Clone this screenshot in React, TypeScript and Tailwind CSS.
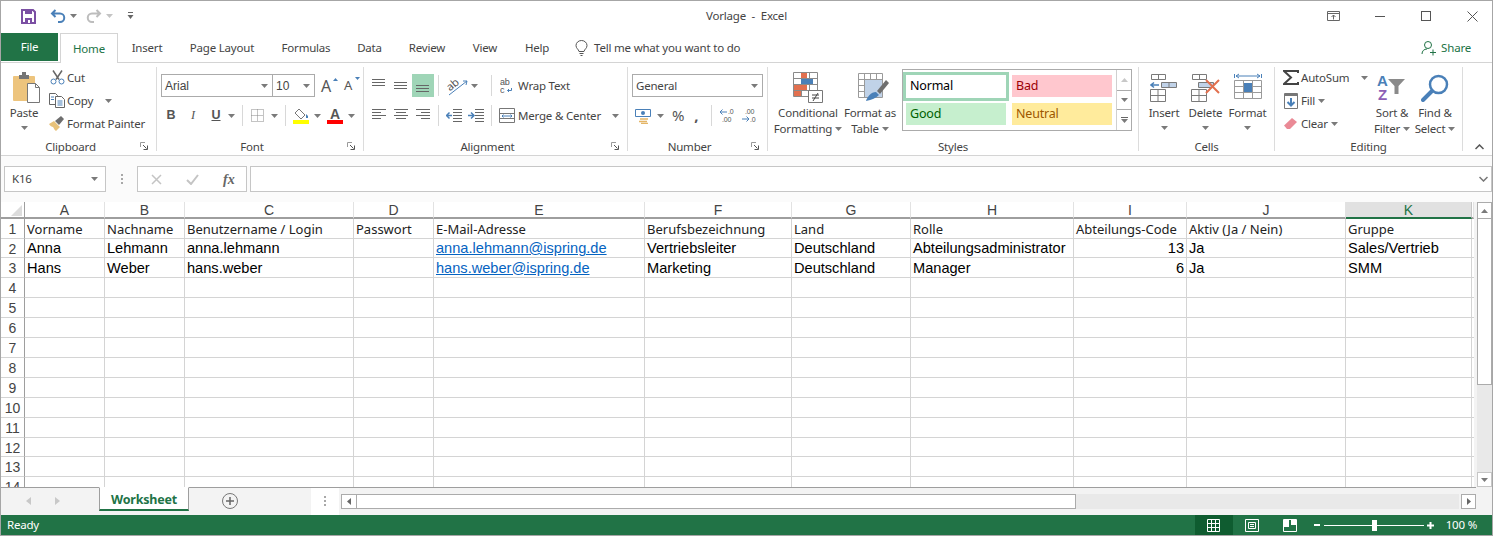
import type { ReactNode } from 'react';

const BLUE = '#4a80b8';

function Caret({ className = '' }: { className?: string }) {
  return (
    <svg width="7" height="4" viewBox="0 0 7 4" className={`shrink-0 ${className}`}>
      <path d="M0 0h7L3.5 4z" fill="#7a7a7a" />
    </svg>
  );
}

function Sep({ className = '' }: { className?: string }) {
  return <div className={`w-px h-[21px] bg-[#d8d8d8] shrink-0 ${className}`} />;
}

function Launcher() {
  return (
    <svg width="8" height="8" viewBox="0 0 8 8" className="mt-[3px]">
      <path d="M.5 5V.5H5" fill="none" stroke="#9a9a9a" />
      <path d="M3 3l3.5 3.5M7.5 3.5v4h-4" fill="none" stroke="#555" />
    </svg>
  );
}

function Group({ width, label, launcher, children }: { width: string; label: string; launcher?: boolean; children: ReactNode }) {
  return (
    <div className={`${width} shrink-0 flex flex-col border-r border-[#dcdcdc]`}>
      <div className="h-[72px] flex">{children}</div>
      <div className="h-[12px] flex leading-[16px] text-[11.5px] text-[#444]">
        <div className="flex-1 text-center whitespace-nowrap">{label}</div>
        {launcher && <div className="w-[16px]"><Launcher /></div>}
      </div>
    </div>
  );
}

function Lines({ kind }: { kind: 'top' | 'middle' | 'bottom' | 'left' | 'center' | 'right' }) {
  const rows: Record<string, string> = {
    top: 'M1 1.500h13M1 4.500h13M1 7.500h13',
    middle: 'M1 4.500h13M1 7.500h13M1 10.500h13',
    bottom: 'M1 7.500h13M1 10.500h13M1 13.500h13',
    left: 'M1 1.500h14M1 4.500h9M1 7.500h14M1 10.500h9',
    center: 'M1 1.500h14M3 4.500h10M1 7.500h14M3 10.500h10',
    right: 'M1 1.500h14M6 4.500h9M1 7.500h14M6 10.500h9',
  };
  return (
    <svg width="16" height="15" viewBox="0 0 16 15">
      <path d={rows[kind]} stroke="#666" fill="none" />
    </svg>
  );
}

function BigBtn({ label, caret, children, width }: { label: ReactNode; caret?: boolean; children: ReactNode; width: string }) {
  return (
    <div className={`${width} flex flex-col items-center text-[11.5px] text-[#444]`}>
      <div className="h-[35px] mt-[3px] flex items-center justify-center">{children}</div>
      <div className="leading-[16px] text-center whitespace-nowrap">{label}</div>
      {caret && <Caret className="mt-[5px]" />}
    </div>
  );
}

function SmallRow({ icon, label, caret, gap = 'ml-0' }: { icon: ReactNode; label: string; caret?: boolean; gap?: string }) {
  return (
    <div className="h-[23px] flex items-center text-[11.5px] text-[#444] whitespace-nowrap">
      <div className="w-[20px] flex justify-center">{icon}</div>
      <span>{label}</span>
      {caret && <Caret className={gap} />}
    </div>
  );
}

function Combo({ value, width, font = '' }: { value: string; width: string; font?: string }) {
  return (
    <div className={`${width} h-[23px] flex items-center justify-between border border-[#ababab] bg-white px-[3px] pr-[4px] text-[#444] ${font}`}>
      <span>{value}</span>
      <Caret />
    </div>
  );
}

const columns = [
  { name: 'A', w: 'w-[80px]' },
  { name: 'B', w: 'w-[80px]' },
  { name: 'C', w: 'w-[169px]' },
  { name: 'D', w: 'w-[80px]' },
  { name: 'E', w: 'w-[211px]' },
  { name: 'F', w: 'w-[147px]' },
  { name: 'G', w: 'w-[119px]' },
  { name: 'H', w: 'w-[163px]' },
  { name: 'I', w: 'w-[113px]' },
  { name: 'J', w: 'w-[159px]' },
  { name: 'K', w: 'w-[126px]' },
  { name: '', w: 'w-[2px]' },
];

const heights = ['h-[20px]', 'h-[19px]', 'h-[20px]', 'h-[20px]', 'h-[20px]', 'h-[20px]', 'h-[20px]', 'h-[20px]', 'h-[20px]', 'h-[20px]', 'h-[20px]', 'h-[19px]', 'h-[20px]', 'h-[20px]'];

const headerRow = ['Vorname', 'Nachname', 'Benutzername / Login', 'Passwort', 'E-Mail-Adresse', 'Berufsbezeichnung', 'Land', 'Rolle', 'Abteilungs-Code', 'Aktiv (Ja / Nein)', 'Gruppe', ''];
const dataRows = [
  ['Anna', 'Lehmann', 'anna.lehmann', '', 'anna.lehmann@ispring.de', 'Vertriebsleiter', 'Deutschland', 'Abteilungsadministrator', '13', 'Ja', 'Sales/Vertrieb', ''],
  ['Hans', 'Weber', 'hans.weber', '', 'hans.weber@ispring.de', 'Marketing', 'Deutschland', 'Manager', '6', 'Ja', 'SMM', ''],
];

function Cell({ value, col, row }: { value: string; col: number; row: number }) {
  const isHeader = row === 0;
  const link = !isHeader && col === 4;
  const right = !isHeader && col === 8;
  let look = "font-['Liberation_Sans'] text-[14.6px] text-black";
  if (isHeader) look = "font-['Noto_Sans'] text-[13px] text-[#222]";
  if (link) look = "font-['Liberation_Sans'] text-[14.6px] text-[#0563c1] underline";
  return (
    <div
      className={`${columns[col].w} shrink-0 border-r border-b border-[#d4d4d4] overflow-hidden whitespace-nowrap flex items-center px-[2px] pt-[2px] tracking-normal ${look} ${right ? 'justify-end' : ''}`}
    >
      {value}
    </div>
  );
}

function TitleBar() {
  return (
    <div className="h-[32px] shrink-0 grid grid-cols-[1fr_auto_1fr] items-center bg-white pb-[2px]">
      <div className="flex items-center pl-[20px]">
        <svg width="15" height="15" viewBox="0 0 15 15">
          <path d="M1 1h11l2 2v11H1z" fill="none" stroke="#7b4fa3" strokeWidth="2" />
          <path d="M4 1h7v4H4zM4 9h7v5H4z" fill="#7b4fa3" />
          <path d="M7 11h2v3H7z" fill="#fff" />
        </svg>
        <svg width="16" height="15" viewBox="0 0 16 15" className="ml-[14px]">
          <path d="M5.500 1L2 4.500 5.500 8M2.500 4.500H10a4 4 0 0 1 0 8.500H8" fill="none" stroke="#4a80b8" strokeWidth="2" />
        </svg>
        <Caret className="ml-[4px]" />
        <svg width="16" height="15" viewBox="0 0 16 15" className="ml-[9px]">
          <path d="M10.500 1L14 4.500 10.500 8M13.500 4.500H6a4 4 0 0 0 0 8.500H8" fill="none" stroke="#bdbdbd" strokeWidth="2" />
        </svg>
        <svg width="7" height="4" viewBox="0 0 7 4" className="ml-[4px]"><path d="M0 0h7L3.500 4z" fill="#c4c4c4" /></svg>
        <svg width="7" height="8" viewBox="0 0 7 8" className="ml-[14px]">
          <path d="M1 .5h5" stroke="#666" /><path d="M.5 3h6L3.500 7z" fill="#666" />
        </svg>
      </div>
      <div className="text-[11.5px] text-[#444] whitespace-pre">Vorlage  -  Excel</div>
      <div className="flex items-center justify-end">
        <svg width="14" height="11" viewBox="0 0 14 11" className="mr-[34px]">
          <path d="M.5.5h12v9H.5zM.5 2.500h12M6.500 8.500V4M4.500 6l2-2 2 2" fill="none" stroke="#666" />
        </svg>
        <div className="w-[10px] h-px bg-[#555] mr-[36px]" />
        <div className="w-[10px] h-[10px] border border-[#555] mr-[36px]" />
        <svg width="11" height="11" viewBox="0 0 11 11" className="mr-[14px]">
          <path d="M.5.5l10 10M10.500.5l-10 10" stroke="#555" />
        </svg>
      </div>
    </div>
  );
}

function Tabs() {
  const tabs = [
    { label: 'Insert', w: 'w-[58px]' },
    { label: 'Page Layout', w: 'w-[92px]' },
    { label: 'Formulas', w: 'w-[76px]' },
    { label: 'Data', w: 'w-[51px]' },
    { label: 'Review', w: 'w-[64px]' },
    { label: 'View', w: 'w-[52px]' },
    { label: 'Help', w: 'w-[52px]' },
  ];
  return (
    <div className="h-[30px] shrink-0 flex items-stretch border-b border-[#d4d4d4] text-[11.5px] text-[#444] bg-white">
      <div className="w-[57px] mb-px bg-[#217346] text-white flex items-center justify-center">File</div>
      <div className="w-[58px] ml-[2px] -mb-px bg-white border border-b-0 border-[#d4d4d4] text-[#217346] flex items-center justify-center">Home</div>
      {tabs.map((t) => (
        <div key={t.label} className={`${t.w} flex items-center justify-center`}>{t.label}</div>
      ))}
      <div className="flex items-center ml-[12px]">
        <svg width="13" height="16" viewBox="0 0 13 16">
          <path d="M4 11.500C3.500 9 1 8.500 1 5.500a5.500 5 0 0 1 11 0c0 3-2.500 3.500-3 6zM4.500 13.500h4M5.500 15.500h2" fill="none" stroke="#555" />
        </svg>
        <span className="ml-[6px]">Tell me what you want to do</span>
      </div>
      <div className="ml-auto mr-[21px] flex items-center text-[#217346]">
        <svg width="16" height="16" viewBox="0 0 16 16">
          <circle cx="7" cy="5" r="3.500" fill="none" stroke="#217346" />
          <path d="M1 14c0-3 2-5 5-5M9 12.500h6M12 9.500v6" fill="none" stroke="#217346" />
        </svg>
        <span className="ml-[4px]">Share</span>
      </div>
    </div>
  );
}

function ClipboardGroup() {
  return (
    <Group width="w-[156px]" label="Clipboard" launcher>
      <BigBtn label="Paste" caret width="w-[46px]">
        <svg width="30" height="32" viewBox="0 0 30 32" className="ml-[5px]">
          <rect x="1" y="4" width="22" height="25" rx="1" fill="#edc47d" />
          <path d="M7 3h10v4H7z" fill="#757575" />
          <path d="M10 0h4v3h-4z" fill="#757575" />
          <path d="M15.500 11.500h8l4 4v15h-12z" fill="#fff" stroke="#777" />
          <path d="M23.500 11.500v4h4" fill="none" stroke="#777" />
        </svg>
      </BigBtn>
      <div className="-mt-px">
        <SmallRow label="Cut" icon={
          <svg width="15" height="15" viewBox="0 0 15 15">
            <path d="M3 .5l6 9M12 .5l-6 9" stroke="#666" strokeWidth="1.500" fill="none" />
            <circle cx="3.500" cy="11.500" r="2.500" fill="none" stroke={BLUE} />
            <circle cx="11.500" cy="11.500" r="2.500" fill="none" stroke={BLUE} />
          </svg>
        } />
        <SmallRow label="Copy" caret gap="ml-[12px]" icon={
          <svg width="16" height="15" viewBox="0 0 16 15">
            <path d="M.5.500h6l2 2v9h-8z" fill="#fff" stroke="#666" />
            <path d="M6.500 3.500h6l3 3v8h-9z" fill="#fff" stroke="#666" />
            <path d="M2 4h3M2 6.500h3M8.500 8h5M8.500 10h5M8.500 12h5" stroke={BLUE} />
          </svg>
        } />
        <SmallRow label="Format Painter" icon={
          <svg width="16" height="15" viewBox="0 0 16 15">
            <path d="M0 8l5-3 6 6-4 4c-2-1-2-3-3-4-1 0-3-1-4-3z" fill="#e8c27a" />
            <path d="M6 5l6-5 3 3-5 6z" fill="#6e6e6e" />
          </svg>
        } />
      </div>
    </Group>
  );
}

function FontGroup() {
  return (
    <Group width="w-[207px]" label="Font" launcher>
      <div className="pl-[4px] pt-[7px] w-full">
        <div className="flex items-center text-[12px] tracking-normal">
          <Combo value="Arial" width="w-[112px]" font="font-['Liberation_Sans']" />
          <Combo value="10" width="w-[43px] -ml-px" font="font-['Liberation_Sans']" />
          <div className="ml-[6px] w-[15px] relative text-[16px] leading-none text-[#555]">
            A
            <svg width="5" height="3" viewBox="0 0 5 3" className="absolute right-[-2px] top-0"><path d="M0 3h5L2.500 0z" fill={BLUE} /></svg>
          </div>
          <div className="ml-[8px] w-[14px] relative text-[13px] leading-none text-[#555]">
            A
            <svg width="5" height="3" viewBox="0 0 5 3" className="absolute right-[-2px] top-[-2px]"><path d="M0 0h5L2.500 3z" fill={BLUE} /></svg>
          </div>
        </div>
        <div className="mt-[8px] h-[21px] flex items-center text-[12.5px] tracking-normal text-[#555] font-['Liberation_Sans']">
          <span className="ml-[5px] w-[10px] font-bold text-center">B</span>
          <span className="ml-[12px] w-[10px] italic font-['Liberation_Serif'] text-center">I</span>
          <span className="ml-[13px] w-[10px] font-bold underline text-center">U</span>
          <Caret className="ml-[7px]" />
          <Sep className="ml-[7px]" />
          <svg width="13" height="13" viewBox="0 0 13 13" className="ml-[8px]">
            <path d="M.5.500h12v12H.5zM6.500.500v12M.5 6.500h12" stroke="#888" strokeDasharray="1 1" fill="none" />
          </svg>
          <Caret className="ml-[7px]" />
          <Sep className="ml-[7px]" />
          <div className="ml-[7px] w-[16px] flex flex-col items-center">
            <svg width="16" height="12" viewBox="0 0 16 12">
              <path d="M6 1l6 6-4 4-6-6z" fill="#fff" stroke="#777" />
              <path d="M13 6l2 2v2h-2z" fill={BLUE} />
            </svg>
            <div className="w-[16px] h-[4px] bg-[#ffff00]" />
          </div>
          <Caret className="ml-[5px]" />
          <div className="ml-[6px] w-[16px] flex flex-col items-center">
            <span className="text-[14px] leading-[12px] font-bold text-[#555]">A</span>
            <div className="w-[16px] h-[4px] bg-[#ff0000]" />
          </div>
          <Caret className="ml-[5px]" />
        </div>
      </div>
    </Group>
  );
}

function AlignmentGroup() {
  return (
    <Group width="w-[264px]" label="Alignment" launcher>
      <div className="w-[75px] pl-[8px] pt-[7px] shrink-0 -ml-px">
        <div className="flex items-center h-[23px]">
          <Lines kind="top" />
          <div className="w-[6px]" />
          <Lines kind="middle" />
          <div className="ml-[3px] w-[22px] h-[23px] bg-[#9fd5b7] flex items-center justify-center"><Lines kind="bottom" /></div>
        </div>
        <div className="flex items-center h-[21px] mt-[8px]">
          <Lines kind="left" />
          <div className="w-[6px]" />
          <Lines kind="center" />
          <div className="w-[6px]" />
          <Lines kind="right" />
        </div>
      </div>
      <div className="w-[53px] shrink-0 pt-[7px]">
        <div className="flex items-center h-[23px]">
          <Sep />
          <svg width="22" height="20" viewBox="0 0 22 20" className="ml-[8px]">
            <path d="M2 19L20 5M20 5l-4 0M20 5l-1 4" stroke={BLUE} fill="none" />
            <text x="0" y="13" fontSize="11" fill="#555" transform="rotate(-40 5 10)" fontFamily="Noto Sans">ab</text>
          </svg>
          <Caret className="ml-[2px]" />
        </div>
        <div className="flex items-center h-[21px] mt-[8px]">
          <Sep />
          <svg width="16" height="15" viewBox="0 0 16 15" className="ml-[7px]">
            <path d="M7 1.500h9M7 4.500h9M7 7.500h9M7 10.500h9M7 13.500h9" stroke="#666" />
            <path d="M6 7.500H1M3.500 4.500l-3 3 3 3" stroke={BLUE} strokeWidth="1.500" fill="none" />
          </svg>
          <svg width="16" height="15" viewBox="0 0 16 15" className="ml-[6px]">
            <path d="M7 1.500h9M7 4.500h9M7 7.500h9M7 10.500h9M7 13.500h9" stroke="#666" />
            <path d="M0 7.500h5M3 4.500l3 3-3 3" stroke={BLUE} strokeWidth="1.500" fill="none" />
          </svg>
        </div>
      </div>
      <div className="pt-[7px] flex-1">
        <div className="flex items-center h-[23px] text-[11.5px] text-[#444] whitespace-nowrap">
          <Sep />
          <svg width="14" height="16" viewBox="0 0 14 16" className="ml-[8px]">
            <text x="0" y="7" fontSize="9" fill="#555" fontFamily="Liberation Sans">ab</text>
            <text x="0" y="15" fontSize="9" fill="#555" fontFamily="Liberation Sans">c</text>
            <path d="M11.500 10v2.500H7.500M9 11l-1.500 1.500L9 14" fill="none" stroke={BLUE} />
          </svg>
          <span className="ml-[4px]">Wrap Text</span>
        </div>
        <div className="flex items-center h-[21px] mt-[8px] text-[11.5px] text-[#444] whitespace-nowrap">
          <Sep />
          <svg width="16" height="15" viewBox="0 0 16 15" className="ml-[7px]">
            <path d="M.5.500h15v14H.5zM.5 5.500h15M.5 10.500h15" fill="none" stroke="#777" />
            <path d="M3 8h10M4.500 6.500L3 8l1.500 1.500M11.500 6.500L13 8l-1.500 1.500" fill="#fff" stroke={BLUE} />
          </svg>
          <span className="ml-[3px]">Merge &amp; Center</span>
          <Caret className="ml-[11px]" />
        </div>
      </div>
    </Group>
  );
}

function NumberGroup() {
  return (
    <Group width="w-[140px]" label="Number" launcher>
      <div className="pl-[4px] pt-[7px]">
        <Combo value="General" width="w-[131px]" font="text-[11.5px]" />
        <div className="mt-[8px] h-[21px] flex items-center text-[#555]">
          <svg width="16" height="16" viewBox="0 0 16 16" className="ml-[3px]">
            <path d="M.5 1.500h15v7H.5z" fill="#fff" stroke={BLUE} />
            <circle cx="8" cy="5" r="2" fill={BLUE} />
            <path d="M5 11h8M4 13.500h8M6 15.500h7" stroke="#e4b566" strokeWidth="1.500" />
          </svg>
          <Caret className="ml-[6px]" />
          <span className="ml-[8px] text-[15px] leading-none">%</span>
          <span className="ml-[10px] text-[15px] leading-none font-bold">,</span>
          <Sep className="ml-[13px]" />
          <svg width="17" height="15" viewBox="0 0 17 15" className="ml-[7px]">
            <path d="M1 4h7M3.500 1.500L1 4l2.500 2.500" stroke={BLUE} fill="none" />
            <text x="9" y="6" fontSize="7" fill="#555" fontFamily="Liberation Sans">.0</text>
            <text x="3" y="14" fontSize="7" fill="#555" fontFamily="Liberation Sans">.00</text>
          </svg>
          <svg width="17" height="15" viewBox="0 0 17 15" className="ml-[5px]">
            <text x="4" y="6" fontSize="7" fill="#555" fontFamily="Liberation Sans">.00</text>
            <path d="M1 11h7M5.500 8.500L8 11l-2.500 2.500" stroke={BLUE} fill="none" />
            <text x="9" y="14" fontSize="7" fill="#555" fontFamily="Liberation Sans">.0</text>
          </svg>
        </div>
      </div>
    </Group>
  );
}

function StyleCell({ label, className }: { label: string; className: string }) {
  return <div className={`w-[100px] h-[22px] flex items-center pl-[4px] text-[12.5px] ${className}`}>{label}</div>;
}

function StylesGroup() {
  return (
    <Group width="w-[371px]" label="Styles">
      <div className="flex ml-[5px]">
        <BigBtn width="w-[70px]" label={<>Conditional<br /><span className="inline-flex items-center">Formatting<Caret className="ml-[3px]" /></span></>}>
          <svg width="30" height="31" viewBox="0 0 30 31">
            <path d="M.5.500h24v24H.5zM.5 6.500h24M.5 12.500h24M.5 18.500h24M8.500.500v24M16.500.500v24" fill="none" stroke="#8a8a8a" />
            <path d="M8 1h6v5H8zM8 13h6v5H8zM1 19h7v5H1z" fill="#e2704f" />
            <path d="M8 7h12v5H8z" fill="#4a80b8" />
            <path d="M1 13h7v5H1z" fill="#e2704f" />
            <path d="M15.500 18.500h14v12h-14z" fill="#fff" stroke="#777" />
            <path d="M19 23h7M19 26h7M25 21l-5 8" stroke="#444" fill="none" />
          </svg>
        </BigBtn>
        <BigBtn width="w-[54px]" label={<>Format as<br /><span className="inline-flex items-center">Table<Caret className="ml-[3px]" /></span></>}>
          <svg width="31" height="29" viewBox="0 0 31 29" className="ml-[6px]">
            <path d="M.5.500h24v24H.5zM.5 6.500h24M.5 12.500h24M.5 18.500h24M6.500.500v24M12.500.500v24M18.500.500v24" fill="none" stroke="#9a9a9a" />
            <path d="M7 7h17v17H7z" fill="#c0d2e8" />
            <path d="M19 18L28 7l3 3-9 11z" fill="#6f6f6f" />
            <path d="M8 28c1-4 5-9 10-9l3 3c-3 3-7 5-13 6z" fill={BLUE} />
          </svg>
        </BigBtn>
      </div>
      <div className="ml-[5px] mt-[2px] w-[230px] h-[62px] flex border border-[#ababab] bg-white">
        <div className="w-[213px] grid grid-cols-[105px_100px] gap-x-[4px] gap-y-[3px] pt-[2px] content-start">
          <div className="w-[106px] h-[29px] -mb-px border-[3px] border-[#9fd5b7] flex items-center pl-[4px] text-[12.5px] text-black">Normal</div>
          <StyleCell label="Bad" className="bg-[#ffc7ce] text-[#9c0006] mt-[3px]" />
          <StyleCell label="Good" className="bg-[#c6efce] text-[#006100] ml-[3px]" />
          <StyleCell label="Neutral" className="bg-[#ffeb9c] text-[#9c5700]" />
        </div>
        <div className="flex-1 border-l border-[#d0d0d0] flex flex-col">
          <div className="h-[20px] flex items-center justify-center">
            <svg width="7" height="4" viewBox="0 0 7 4"><path d="M0 4h7L3.500 0z" fill="#c8c8c8" /></svg>
          </div>
          <div className="h-[20px] border-y border-[#ababab] flex items-center justify-center"><Caret /></div>
          <div className="flex-1 flex flex-col items-center justify-center">
            <div className="w-[7px] h-px bg-[#666] mb-px" />
            <Caret />
          </div>
        </div>
      </div>
    </Group>
  );
}

function GridIcon() {
  return <path d="M.5 15.500h15v12H.5zM.5 21.500h15M8 15.500v12" fill="none" stroke="#7a7a7a" />;
}

function CellsGroup() {
  return (
    <Group width="w-[136px]" label="Cells">
      <div className="flex pl-[4px]">
        <BigBtn label="Insert" caret width="w-[42px]">
          <svg width="28" height="28" viewBox="0 0 28 28">
            <path d="M1.500.500h14v5h-14zM8.500.500v5" fill="none" stroke="#7a7a7a" />
            <path d="M1 11h8M4 8.500L1 11l3 2.500" fill="none" stroke={BLUE} strokeWidth="1.500" />
            <path d="M11.500 8.500h15v5h-15zM19 8.500v5" fill="#c0d2e8" stroke="#7a7a7a" />
            <GridIcon />
          </svg>
        </BigBtn>
        <BigBtn label="Delete" caret width="w-[41px]">
          <svg width="30" height="28" viewBox="0 0 30 28">
            <path d="M1.500.500h14v5h-14zM8.500.500v5" fill="none" stroke="#7a7a7a" />
            <path d="M7.500 8.500h15v5h-15z" fill="#c0d2e8" stroke="#7a7a7a" />
            <GridIcon />
            <path d="M15 6l13 13M28 6L15 19" stroke="#e2704f" strokeWidth="2" />
          </svg>
        </BigBtn>
        <BigBtn label="Format" caret width="w-[43px]">
          <svg width="28" height="30" viewBox="0 0 28 30">
            <path d="M.5 1v4M27.500 1v4M2 3h24M5 1L2 3l3 2M23 1l3 2-3 2" fill="none" stroke={BLUE} />
            <path d="M.5 7.500h27v18H.5zM.5 13.500h27M.5 19.500h27M9.500 7.500v18M18.500 7.500v18" fill="none" stroke="#9a9a9a" />
            <path d="M10 10h8v9h-8z" fill={BLUE} />
          </svg>
        </BigBtn>
      </div>
    </Group>
  );
}

function EditingGroup() {
  return (
    <Group width="w-[188px]" label="Editing">
      <div className="w-[95px] shrink-0 -mt-px pl-[6px]">
        <SmallRow label="AutoSum" caret gap="ml-[12px]" icon={
          <svg width="16" height="15" viewBox="0 0 16 15"><path d="M15 3V1H1l7 6.500L1 14h14v-2" fill="none" stroke="#444" strokeWidth="2" /></svg>
        } />
        <SmallRow label="Fill" caret gap="ml-[3px]" icon={
          <svg width="14" height="16" viewBox="0 0 14 16">
            <path d="M.5.500h13v15H.5z" fill="#fff" stroke="#777" />
            <path d="M1 1h12v2H1z" fill="#777" />
            <path d="M7 5v7M3.500 9L7 12.500 10.500 9" fill="none" stroke={BLUE} strokeWidth="2" />
          </svg>
        } />
        <SmallRow label="Clear" caret gap="ml-[3px]" icon={
          <svg width="14" height="13" viewBox="0 0 14 13">
            <path d="M0 8.500L8 1l5 4-7 7H3z" fill="#ea8a96" />
          </svg>
        } />
      </div>
      <BigBtn width="w-[44px]" label={<>Sort &amp;<br /><span className="inline-flex items-center">Filter<Caret className="ml-[3px]" /></span></>}>
        <div className="flex items-center h-[30px] -ml-[2px] tracking-normal">
          <div className="flex flex-col items-center font-['Liberation_Sans'] font-bold text-[15px] leading-[14px]">
            <span className="text-[#4a80b8]">A</span>
            <span className="text-[#8d5fb5]">Z</span>
          </div>
          <svg width="17" height="17" viewBox="0 0 17 17" className="mt-[-2px]">
            <path d="M0 1h17l-6.500 7v8h-4V8z" fill="#8a8a8a" />
          </svg>
        </div>
      </BigBtn>
      <BigBtn width="w-[42px]" label={<>Find &amp;<br /><span className="inline-flex items-center">Select<Caret className="ml-[3px]" /></span></>}>
        <svg width="28" height="28" viewBox="0 0 28 28">
          <circle cx="17.500" cy="10.500" r="8.500" fill="none" stroke={BLUE} strokeWidth="2.500" />
          <path d="M11 17L2 26" stroke={BLUE} strokeWidth="4" strokeLinecap="round" />
        </svg>
      </BigBtn>
    </Group>
  );
}

function Ribbon() {
  return (
    <div className="h-[93px] shrink-0 pt-[4px] border-b border-[#d4d4d4] flex items-start bg-white">
      <ClipboardGroup />
      <FontGroup />
      <AlignmentGroup />
      <NumberGroup />
      <StylesGroup />
      <CellsGroup />
      <EditingGroup />
      <div className="flex-1 flex justify-end pr-[8px] pt-[77px]">
        <svg width="9" height="6" viewBox="0 0 9 6"><path d="M.5 5l4-4 4 4" fill="none" stroke="#555" strokeWidth="1.500" /></svg>
      </div>
    </div>
  );
}

function FormulaBar() {
  return (
    <div className="h-[46px] shrink-0 flex items-start pt-[10px] pl-[3px] bg-[#fbfbfb]">
      <div className="w-[102px] h-[26px] bg-white border border-[#c6c6c6] flex items-center justify-between pl-[7px] pr-[7px] text-[11.5px] text-[#444]">
        K16
        <Caret />
      </div>
      <div className="w-[31px] flex flex-col items-center gap-[2px] pt-[8px]">
        <div className="w-[2px] h-[2px] bg-[#a8a8a8]" />
        <div className="w-[2px] h-[2px] bg-[#a8a8a8]" />
        <div className="w-[2px] h-[2px] bg-[#a8a8a8]" />
      </div>
      <div className="w-[110px] h-[26px] bg-white border border-[#c6c6c6] flex items-center">
        <svg width="11" height="11" viewBox="0 0 11 11" className="ml-[13px]"><path d="M1 1l9 9M10 1l-9 9" stroke="#c4c4c4" strokeWidth="1.500" /></svg>
        <svg width="13" height="11" viewBox="0 0 13 11" className="ml-[24px]"><path d="M1 6l4 4 7-9" fill="none" stroke="#c4c4c4" strokeWidth="2" /></svg>
        <span className="ml-[24px] font-['Liberation_Serif'] italic font-bold text-[14px] tracking-normal text-[#666]">fx</span>
      </div>
      <div className="ml-[3px] w-[1242px] h-[26px] bg-white border border-[#c6c6c6] flex items-center justify-end pr-[3px]">
        <svg width="9" height="6" viewBox="0 0 9 6"><path d="M.5 1l4 4 4-4" fill="none" stroke="#777" strokeWidth="1.500" /></svg>
      </div>
    </div>
  );
}

function Sheet() {
  return (
    <div className="h-[285px] shrink-0 flex bg-[#f3f3f3] overflow-hidden">
      <div className="w-[1473px] shrink-0 bg-white overflow-hidden">
        <div className="flex h-[17px] font-['Liberation_Sans'] text-[14px] tracking-normal text-[#444]">
          <div className="w-[24px] shrink-0 bg-[#fff] border-r border-b-2 border-[#9e9e9e] flex items-end justify-end pr-[2px] pb-[1px]">
            <svg width="11" height="11" viewBox="0 0 11 11"><path d="M11 0v11H0z" fill="#dcdcdc" /></svg>
          </div>
          {columns.map((c) => (
            <div
              key={c.name || 'x'}
              className={`${c.w} shrink-0 border-r flex items-center justify-center pt-px ${
                c.name === 'K' ? 'bg-[#e1e1e1] text-[#217346] border-b-2 border-b-[#217346] border-r-[#c6c6c6]' : 'border-b-2 border-b-[#9e9e9e] border-r-[#e2e2e2]'
              }`}
            >
              {c.name}
            </div>
          ))}
        </div>
        {heights.map((h, r) => {
          const row = r === 0 ? headerRow : r <= 2 ? dataRows[r - 1] : null;
          return (
            <div key={r} className={`flex ${h}`}>
              <div className="w-[24px] shrink-0 border-r border-b border-r-[#9e9e9e] border-b-[#d4d4d4] flex items-center justify-center pt-[2px] font-['Liberation_Sans'] text-[14px] tracking-normal text-[#444]">
                {r + 1}
              </div>
              {columns.map((_, c) => (
                <Cell key={c} col={c} row={r} value={row ? row[c] : ''} />
              ))}
            </div>
          );
        })}
      </div>
      <div className="w-[15px] ml-[3px] shrink-0 flex flex-col">
        <div className="h-[17px] bg-white border border-[#ababab] flex items-center justify-center">
          <svg width="7" height="4" viewBox="0 0 7 4"><path d="M0 4h7L3.500 0z" fill="#7a7a7a" /></svg>
        </div>
        <div className="h-[166px] bg-white border-x border-b border-[#ababab]" />
        <div className="flex-1 bg-[#e9e9e9]" />
        <div className="h-[15px] bg-white border border-[#c6c6c6] flex items-center justify-center"><Caret /></div>
      </div>
    </div>
  );
}

function SheetBar() {
  return (
    <div className="h-[28px] shrink-0 flex bg-[#f3f3f3] items-stretch">
      <div className="w-[1475px] shrink-0 border-t border-[#9e9e9e] flex">
        <div className="w-[98px] flex items-start pt-[9px] pl-[25px]">
          <svg width="5" height="8" viewBox="0 0 5 8"><path d="M5 0v8L0 4z" fill="#c8c8c8" /></svg>
          <svg width="5" height="8" viewBox="0 0 5 8" className="ml-[24px]"><path d="M0 0v8l5-4z" fill="#c8c8c8" /></svg>
        </div>
        <div className="w-[90px] h-[24px] -mt-px pt-[3px] bg-white border-x border-[#9e9e9e] border-t border-t-white border-b-2 border-b-[#217346] flex items-center justify-center text-[12.5px] font-bold text-[#217346]">
          Worksheet
        </div>
        <div className="ml-[33px] mt-[5px] w-[16px] h-[16px] rounded-full border border-[#777] flex items-center justify-center">
          <svg width="10" height="10" viewBox="0 0 10 10"><path d="M5 1v8M1 5h8" stroke="#666" strokeWidth="1.500" /></svg>
        </div>
        <div className="ml-[73px] w-[28px] h-[27px] bg-white flex flex-col items-center gap-[2px] pt-[8px]">
          <div className="w-[2px] h-[2px] bg-[#a8a8a8]" />
          <div className="w-[2px] h-[2px] bg-[#a8a8a8]" />
          <div className="w-[2px] h-[2px] bg-[#a8a8a8]" />
        </div>
        <div className="flex-1 flex items-start pt-[6px] pl-[2px]">
          <div className="w-[16px] h-[15px] bg-white border border-[#ababab] flex items-center justify-center">
            <svg width="4" height="7" viewBox="0 0 4 7"><path d="M4 0v7L0 3.500z" fill="#666" /></svg>
          </div>
          <div className="w-[719px] h-[15px] bg-white border-y border-r border-[#ababab]" />
          <div className="flex-1 h-[15px] bg-[#e9e9e9]" />
          <div className="w-[15px] h-[15px] ml-[2px] bg-white border border-[#ababab] flex items-center justify-center">
            <svg width="4" height="7" viewBox="0 0 4 7"><path d="M0 0v7l4-3.500z" fill="#666" /></svg>
          </div>
        </div>
      </div>
    </div>
  );
}

function StatusBar() {
  return (
    <div className="h-[20px] shrink-0 bg-[#217346] text-white text-[11.5px] flex items-center">
      <span className="ml-[6px]">Ready</span>
      <div className="ml-auto flex items-center h-full">
        <div className="w-[38px] h-full bg-[#0f5c30] flex items-center justify-center">
          <svg width="13" height="13" viewBox="0 0 13 13"><path d="M.5.500h12v12H.5zM4.500.500v12M8.500.500v12M.5 4.500h12M.5 8.500h12" fill="none" stroke="#fff" /></svg>
        </div>
        <div className="w-[38px] flex justify-center">
          <svg width="14" height="13" viewBox="0 0 14 13"><path d="M.5.500h13v12H.5zM3.500 3.500h7v6h-7zM5 5.500h4M5 7.500h4" fill="none" stroke="#fff" /></svg>
        </div>
        <div className="w-[38px] flex justify-center">
          <svg width="14" height="13" viewBox="0 0 14 13"><path d="M.5.500h13v12H.5z" fill="none" stroke="#fff" /><path d="M1 1h5v7H1zM8 1h5v5H8z" fill="#fff" /></svg>
        </div>
        <div className="ml-[5px] w-[6px] h-[2px] bg-white" />
        <div className="ml-[4px] w-[100px] h-px bg-white relative">
          <div className="absolute left-[48px] top-[-5px] w-[5px] h-[11px] bg-white" />
        </div>
        <svg width="7" height="7" viewBox="0 0 7 7" className="ml-[3px]"><path d="M3.500 0v7M0 3.500h7" stroke="#fff" strokeWidth="2" /></svg>
        <span className="ml-[12px] mr-[15px]">100 %</span>
      </div>
    </div>
  );
}

export default function App() {
  return (
    <div className="w-[1493px] h-[536px] overflow-hidden flex flex-col border border-[#a6a6a6] font-['Noto_Sans',sans-serif] tracking-[-0.2px] bg-white">
      <TitleBar />
      <Tabs />
      <Ribbon />
      <FormulaBar />
      <Sheet />
      <SheetBar />
      <StatusBar />
    </div>
  );
}
